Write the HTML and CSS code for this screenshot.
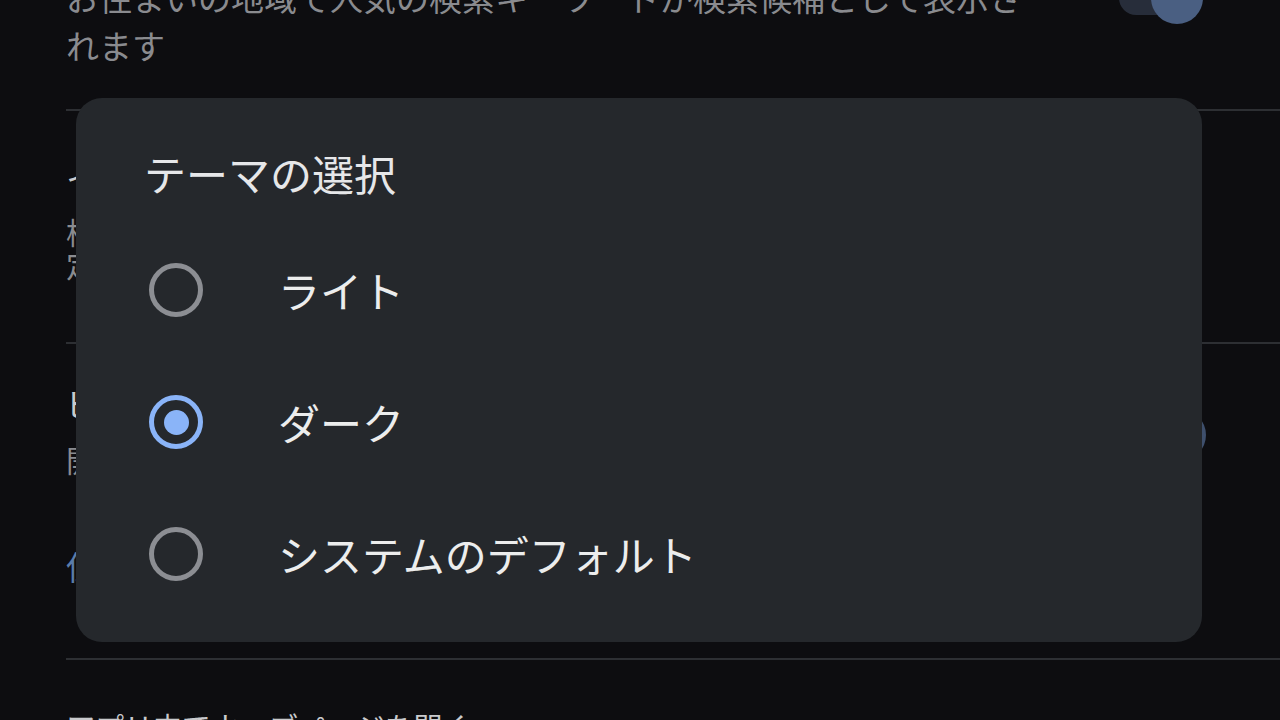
FILE: index.html
```html
<!DOCTYPE html>
<html lang="ja">
<head>
    <meta charset="UTF-8">
    <meta name="viewport" content="width=device-width, initial-scale=1.0">
    <title>テーマの選択</title>
    <link rel="stylesheet" href="styles.css">
</head>
<body>

    <!-- Settings list behind the dialog -->
    <div class="settings">
        <div class="item item-first">
            <p class="desc">お住まいの地域で人気の検索キーワードが検索候補として表示されます</p>
            <div class="toggle toggle-top"><span class="knob"></span></div>
        </div>

        <div class="item item-second">
            <div class="texts">
                <p class="title">インストールされたアプリ</p>
                <p class="desc small">検索時にデバイス上のアプリを候補として表示し、</p>
                <p class="desc small">定期的にアプリの情報を更新します</p>
            </div>
        </div>

        <div class="item item-third">
            <div class="texts">
                <p class="title">ピープルの検索候補</p>
                <p class="desc small">開いた連絡先を検索候補に表示します</p>
                <p class="link">位置情報の設定</p>
            </div>
            <div class="toggle toggle-mid"><span class="knob"></span></div>
        </div>

        <div class="item item-last">
            <p class="title last">アプリ内でウェブページを開く</p>
        </div>
    </div>

    <!-- Theme dialog -->
    <div class="dialog">
        <h2 class="dialog-title">テーマの選択</h2>
        <div class="option">
            <span class="radio"></span>
            <span class="label">ライト</span>
        </div>
        <div class="option">
            <span class="radio checked"></span>
            <span class="label">ダーク</span>
        </div>
        <div class="option">
            <span class="radio"></span>
            <span class="label">システムのデフォルト</span>
        </div>
    </div>

</body>
</html>
```

FILE: styles.css
```css
body {
    margin: 0;
    padding: 0;
    width: 1280px;
    height: 720px;
    overflow: hidden;
    background-color: #0d0d10;
    font-family: "Noto Sans CJK JP", "Noto Sans", sans-serif;
    color: #e3e4e6;
    position: relative;
}
p {
    margin: 0;
}
.settings {
    margin-left: 66px;
    margin-top: -27px;
}
.item {
    display: flex;
    justify-content: space-between;
    border-bottom: 2px solid #2d2f33;
}
.item-first {
    height: 136px;
}
.item-second {
    height: 231px;
}
.item-third {
    height: 314px;
}
.item-last {
    border-bottom: none;
    padding-top: 42px;
}
.desc {
    font-size: 33px;
    line-height: 48px;
    color: #8a8b8f;
    max-width: 980px;
}
.desc.small {
    font-size: 30px;
    line-height: 33px;
}
.title {
    font-size: 33px;
    line-height: 48px;
    color: #c9cacd;
}
.title.last {
    font-size: 29px;
}
.item-second .texts {
    padding-top: 42px;
}
.item-second .title {
    margin-bottom: 14px;
}
.item-third .texts {
    padding-top: 35px;
}
.item-third .title {
    margin-bottom: 16px;
}
.link {
    margin-top: 66px;
    font-size: 33px;
    line-height: 48px;
    color: #5a7cab;
}
.toggle {
    position: relative;
    width: 74px;
    height: 34px;
    border-radius: 17px;
    background: #272d3a;
    margin-right: 87px;
}
.toggle-top {
    margin-top: 8px;
}
.toggle-mid {
    margin-top: 74px;
    background: transparent;
}
.knob {
    position: absolute;
    right: -10px;
    top: -9px;
    width: 52px;
    height: 52px;
    border-radius: 50%;
    background: #4a5f82;
}
.toggle-mid .knob {
    right: -13px;
    background: #3e4f6c;
}

/* dialog */
.dialog {
    position: absolute;
    left: 76px;
    top: 98px;
    width: 1126px;
    height: 544px;
    box-sizing: border-box;
    padding: 48px 0 0 68px;
    background: #25282c;
    border-radius: 26px;
}
.dialog-title {
    margin: 0 0 24px 0;
    font-size: 42px;
    line-height: 54px;
    font-weight: 400;
    color: #e6e7e9;
}
.option {
    display: flex;
    align-items: center;
    height: 132px;
}
.radio {
    box-sizing: border-box;
    width: 54px;
    height: 54px;
    margin-left: 5px;
    border: 5px solid #8c8e93;
    border-radius: 50%;
    display: flex;
    justify-content: center;
    align-items: center;
    flex-shrink: 0;
}
.radio.checked {
    border-color: #8ab4f8;
}
.radio.checked::after {
    content: "";
    width: 25px;
    height: 25px;
    border-radius: 50%;
    background: #8ab4f8;
}
.label {
    margin-left: 75px;
    font-size: 42px;
    line-height: 54px;
    color: #eceded;
}
```
